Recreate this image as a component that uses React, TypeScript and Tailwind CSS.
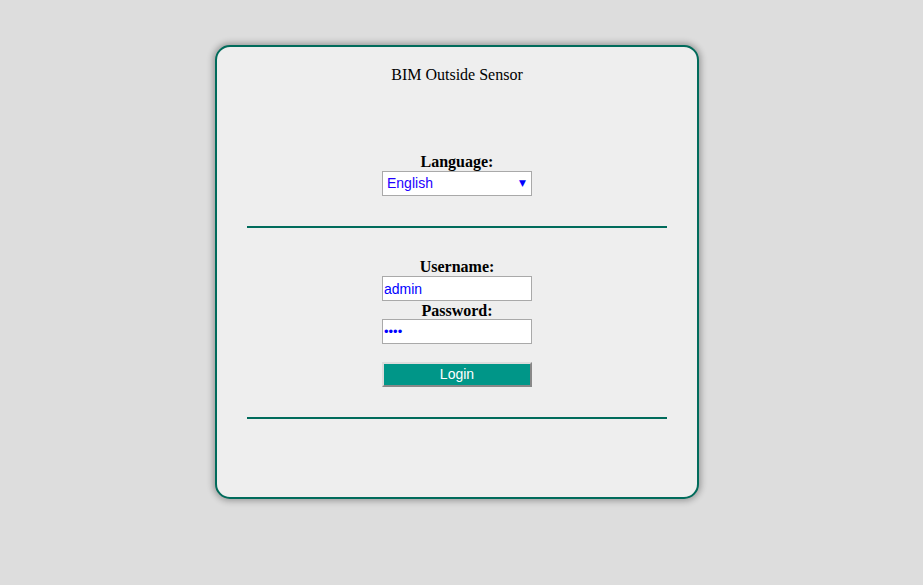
import React, {useState} from 'react'

const App = () => {
  const [lang, setLang] = useState('English')
  const [user, setUser] = useState('admin')
  const [pass, setPass] = useState('1234')

  return (
    <div className="min-h-[585px] bg-[#dddddd] pt-[45px] font-['Liberation_Serif',serif] text-black">
      <div className="ml-[215px] w-[484px] h-[454px] bg-[#eeeeee] border-2 border-[#006b5b] rounded-[15px] shadow-[0_0_6px_2px_rgba(0,0,0,0.3)] flex flex-col items-center">
        <div className="mt-[18px] text-[16px] leading-[20px]">BIM Outside Sensor</div>

        <div className="mt-[67px] flex flex-col items-center">
          <label className="font-bold text-[16px] leading-[19px]">Language:</label>
          <div className="relative w-[150px] h-[25px]">
            <select
              value={lang}
              onChange={e => setLang(e.target.value)}
              className="appearance-none w-full h-full bg-white border border-[#a9a9a9] pl-[4px] text-[14px] text-[#2200ff] font-['Liberation_Sans',sans-serif] outline-none">
              <option>English</option>
            </select>
            <span className="absolute right-[6px] top-[6px] text-[9px] text-[#0000ff] pointer-events-none font-['DejaVu_Sans',sans-serif]">▼</span>
          </div>
        </div>

        <div className="mt-[30px] w-[420px] h-[2px] bg-[#006b5b]" />

        <div className="mt-[30px] flex flex-col items-center">
          <label className="font-bold text-[16px] leading-[18px]">Username:</label>
          <input
            type="text"
            value={user}
            onChange={e => setUser(e.target.value)}
            className="w-[150px] h-[25px] bg-white border border-[#a9a9a9] px-[1px] text-[14px] text-[#0000ff] font-['Liberation_Sans',sans-serif] outline-none"
          />
          <label className="mt-[1px] font-bold text-[16px] leading-[17px]">Password:</label>
          <input
            type="password"
            value={pass}
            onChange={e => setPass(e.target.value)}
            className="w-[150px] h-[25px] bg-white border border-[#a9a9a9] px-[1px] text-[13px] text-[#0000ff] font-['Liberation_Sans',sans-serif] outline-none"
          />
          <button className="mt-[18px] w-[150px] h-[25px] bg-[#009688] text-white text-[14px] font-['Liberation_Sans',sans-serif] border-2 border-t-[#dddddd] border-l-[#dddddd] border-r-[#888888] border-b-[#888888]">
            Login
          </button>
        </div>

        <div className="mt-[30px] w-[420px] h-[2px] bg-[#006b5b]" />
      </div>
    </div>
  )
}

export default App
